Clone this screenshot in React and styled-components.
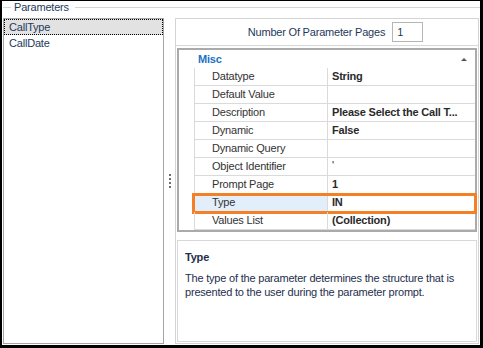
import styled, { createGlobalStyle } from 'styled-components';

const GlobalStyle = createGlobalStyle`
  html, body {
    margin: 0;
    padding: 0;
    background: #ffffff;
  }
  body {
    font-family: "Liberation Sans", Arial, sans-serif;
    font-size: 11px;
    letter-spacing: -0.2px;
  }
`;

const PROPERTIES = [
  { name: 'Datatype', value: 'String' },
  { name: 'Default Value', value: '' },
  { name: 'Description', value: 'Please Select the Call T...' },
  { name: 'Dynamic', value: 'False' },
  { name: 'Dynamic Query', value: '' },
  { name: 'Object Identifier', value: "'", plain: true },
  { name: 'Prompt Page', value: '1' },
  { name: 'Type', value: 'IN', selected: true },
  { name: 'Values List', value: '(Collection)' },
];

function App() {
  return (
    <>
      <GlobalStyle />
      <Frame>
        <GroupTitle>
          <GroupLine $short />
          <GroupText>Parameters</GroupText>
          <GroupLine />
        </GroupTitle>
        <GroupBody>
          <ListBox>
            <ListItem $selected>CallType</ListItem>
            <ListItem>CallDate</ListItem>
          </ListBox>
          <Splitter>
            <Dot />
            <Dot />
            <Dot />
            <Dot />
          </Splitter>
          <RightPanel>
            <PagesBar>
              <PagesLabel>Number Of Parameter Pages</PagesLabel>
              <PagesInput>1</PagesInput>
            </PagesBar>
            <Grid>
              <Category>
                <CategoryName>Misc</CategoryName>
                <CollapseArrow />
              </Category>
              {PROPERTIES.map(({ name, value, plain, selected }) => (
                <Row key={name}>
                  <Gutter />
                  <NameCell $selected={selected}>{name}</NameCell>
                  <ValueCell $plain={plain}>{value}</ValueCell>
                  {selected && <Highlight />}
                </Row>
              ))}
            </Grid>
            <HelpBox>
              <HelpTitle>Type</HelpTitle>
              <HelpText>
                The type of the parameter determines the structure that is
                presented to the user during the parameter prompt.
              </HelpText>
            </HelpBox>
          </RightPanel>
        </GroupBody>
      </Frame>
    </>
  );
}

const Frame = styled.div`
  box-sizing: border-box;
  width: 483px;
  height: 348px;
  border-style: solid;
  border-color: #000000;
  border-width: 1px 3px 3px 2px;
  background: #ffffff;
  display: flex;
  flex-direction: column;
  overflow: hidden;
`;

const GroupTitle = styled.div`
  display: flex;
  align-items: center;
  height: 12px;
  padding-left: 1px;
`;

const GroupLine = styled.div`
  height: 1px;
  background: #d5d5d5;
  ${({ $short }) => ($short ? 'width: 8px;' : 'flex: 1;')}
`;

const GroupText = styled.span`
  margin: 0 6px 0 3px;
  color: #1e395b;
  font-size: 11px;
  line-height: 12px;
`;

const GroupBody = styled.div`
  display: flex;
  margin-top: 5px;
  padding-left: 1px;
  height: 326px;
`;

const ListBox = styled.div`
  box-sizing: border-box;
  width: 161px;
  border: 1px solid #a5a5a5;
  display: flex;
  flex-direction: column;
`;

const ListItem = styled.div`
  box-sizing: border-box;
  height: 16px;
  line-height: 14px;
  padding-left: 4px;
  color: #1e395b;
  border: 1px ${({ $selected }) => ($selected ? 'dotted #000000' : 'solid transparent')};
  background: ${({ $selected }) => ($selected ? '#e2e2e2' : 'transparent')};
`;

const Splitter = styled.div`
  width: 11px;
  display: flex;
  flex-direction: column;
  align-items: center;
  justify-content: center;
  gap: 2px;
  padding-bottom: 1px;
`;

const Dot = styled.span`
  width: 2px;
  height: 2px;
  background: #6f6f6f;
`;

const RightPanel = styled.div`
  box-sizing: border-box;
  width: 304px;
  border: 1px solid #d4d4d4;
  display: flex;
  flex-direction: column;
`;

const PagesBar = styled.div`
  height: 26px;
  border-bottom: 1px solid #d8d8d8;
  display: flex;
  align-items: center;
  justify-content: center;
  gap: 7px;
  padding-left: 17px;
`;

const PagesLabel = styled.span`
  color: #1e395b;
`;

const PagesInput = styled.div`
  box-sizing: border-box;
  width: 31px;
  height: 20px;
  border: 1px solid #b5b5b5;
  padding-left: 4px;
  line-height: 18px;
  color: #1e395b;
`;

const Grid = styled.div`
  box-sizing: border-box;
  margin: 2px 0 0 1px;
  width: 300px;
  border: 2px solid #aaaaaa;
  display: flex;
  flex-direction: column;
`;

const Category = styled.div`
  height: 18px;
  display: flex;
  align-items: center;
  justify-content: space-between;
  padding: 0 8px 0 19px;
`;

const CategoryName = styled.span`
  color: #1c72c4;
  font-weight: bold;
`;

const CollapseArrow = styled.span`
  width: 0;
  height: 0;
  border-left: 3px solid transparent;
  border-right: 3px solid transparent;
  border-bottom: 3px solid #555555;
`;

const Row = styled.div`
  position: relative;
  display: flex;
  height: 18px;
`;

const Gutter = styled.div`
  width: 15px;
`;

const NameCell = styled.div`
  box-sizing: border-box;
  width: 133px;
  border-left: 1px solid #dadada;
  border-bottom: 1px solid #dadada;
  padding-left: 17px;
  line-height: 17px;
  color: #333333;
  background: ${({ $selected }) => ($selected ? '#e2eefa' : 'transparent')};
`;

const ValueCell = styled.div`
  box-sizing: border-box;
  flex: 1;
  border-left: 1px solid #dadada;
  border-bottom: 1px solid #dadada;
  padding-left: 4px;
  line-height: ${({ $plain }) => ($plain ? '14px' : '17px')};
  font-weight: ${({ $plain }) => ($plain ? 'normal' : 'bold')};
  color: #2a2a2a;
  white-space: nowrap;
  overflow: hidden;
`;

const Highlight = styled.div`
  position: absolute;
  left: 13px;
  top: -1px;
  width: 285px;
  height: 21px;
  box-sizing: border-box;
  border: 3px solid #f47f24;
  pointer-events: none;
`;

const HelpBox = styled.div`
  box-sizing: border-box;
  margin: 8px 1px 1px 1px;
  flex: 1;
  border: 1px solid #d8d8d8;
  padding: 9px 7px 0 7px;
  color: #1e2f4d;
`;

const HelpTitle = styled.div`
  font-weight: bold;
  line-height: 14px;
`;

const HelpText = styled.p`
  margin: 7px 0 0 0;
  line-height: 14px;
`;

export default App;
